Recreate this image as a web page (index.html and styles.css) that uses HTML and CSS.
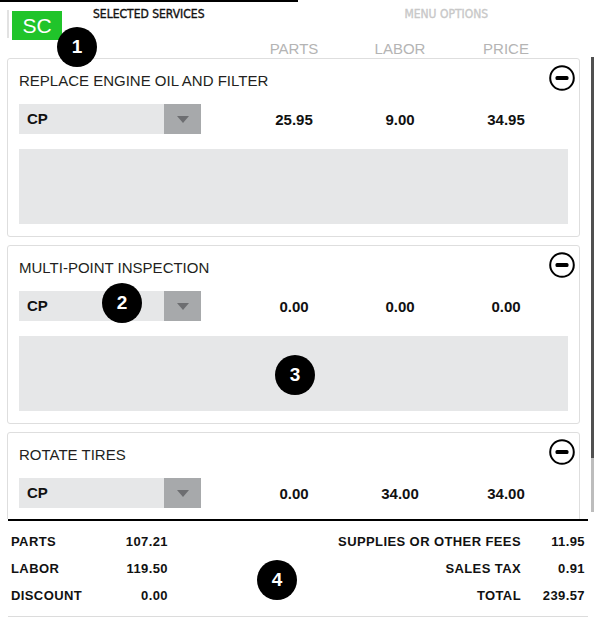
FILE: index.html
```html
<!DOCTYPE html>
<html lang="en">
<head>
<meta charset="utf-8">
<title>Selected Services</title>
<link rel="stylesheet" href="styles.css">
</head>
<body>
<div class="app">
  <header class="top">
    <nav class="tabs">
      <div class="tab active">SELECTED SERVICES</div>
      <div class="tab">MENU OPTIONS</div>
    </nav>
    <div class="brand"><div class="sc">SC</div></div>
    <div class="cols head">
      <span class="col">PARTS</span>
      <span class="col">LABOR</span>
      <span class="col">PRICE</span>
    </div>
  </header>

  <main class="list">
    <section class="card">
      <div class="card-title">
        <span>REPLACE ENGINE OIL AND FILTER</span>
        <svg class="minus" width="26" height="26" viewBox="0 0 26 26"><circle cx="13" cy="13" r="11.8" fill="none" stroke="#000" stroke-width="2"/><rect x="6.5" y="11" width="13" height="4" rx="1.5" fill="#000"/></svg>
      </div>
      <div class="row">
        <div class="select"><span class="select-label">CP</span><span class="select-arrow"><i class="tri"></i></span></div>
        <div class="cols vals"><span class="col">25.95</span><span class="col">9.00</span><span class="col">34.95</span></div>
      </div>
      <div class="notes"></div>
    </section>

    <section class="card">
      <div class="card-title">
        <span>MULTI-POINT INSPECTION</span>
        <svg class="minus" width="26" height="26" viewBox="0 0 26 26"><circle cx="13" cy="13" r="11.8" fill="none" stroke="#000" stroke-width="2"/><rect x="6.5" y="11" width="13" height="4" rx="1.5" fill="#000"/></svg>
      </div>
      <div class="row">
        <div class="select"><span class="select-label">CP</span><span class="select-arrow"><i class="tri"></i></span></div>
        <div class="cols vals"><span class="col">0.00</span><span class="col">0.00</span><span class="col">0.00</span></div>
      </div>
      <div class="notes"></div>
    </section>

    <section class="card">
      <div class="card-title">
        <span>ROTATE TIRES</span>
        <svg class="minus" width="26" height="26" viewBox="0 0 26 26"><circle cx="13" cy="13" r="11.8" fill="none" stroke="#000" stroke-width="2"/><rect x="6.5" y="11" width="13" height="4" rx="1.5" fill="#000"/></svg>
      </div>
      <div class="row">
        <div class="select"><span class="select-label">CP</span><span class="select-arrow"><i class="tri"></i></span></div>
        <div class="cols vals"><span class="col">0.00</span><span class="col">34.00</span><span class="col">34.00</span></div>
      </div>
      <div class="notes"></div>
    </section>
  </main>

  <footer class="totals">
    <div class="tgrid left">
      <span>PARTS</span><span class="num">107.21</span>
      <span>LABOR</span><span class="num">119.50</span>
      <span>DISCOUNT</span><span class="num">0.00</span>
    </div>
    <div class="tgrid right">
      <span class="lbl">SUPPLIES OR OTHER FEES</span><span class="num">11.95</span>
      <span class="lbl">SALES TAX</span><span class="num">0.91</span>
      <span class="lbl">TOTAL</span><span class="num">239.57</span>
    </div>
  </footer>

  <div class="scrollbar"><div class="thumb"></div></div>

  <div class="badge b1">1</div>
  <div class="badge b2">2</div>
  <div class="badge b3">3</div>
  <div class="badge b4">4</div>
</div>
</body>
</html>
```

FILE: styles.css
```css
html, body {
  margin: 0;
  padding: 0;
  background: #fff;
}

.app {
  position: relative;
  width: 595px;
  height: 617px;
  overflow: hidden;
  font-family: "Liberation Sans", Arial, sans-serif;
  color: #1d1d1f;
}

/* header */
.top {
  height: 58px;
}

.tabs {
  display: flex;
}

.tab {
  flex: 1;
  text-align: center;
  border-top: 2px solid transparent;
  line-height: 24px;
  height: 24px;
  font-family: "DejaVu Sans Condensed", "Liberation Sans", sans-serif;
  font-weight: normal;
  font-size: 12px;
  -webkit-text-stroke: 0.35px currentColor;
  color: #c8c8c8;
}

.tab.active {
  border-top-color: #000;
  color: #111;
}

.brand {
  position: absolute;
  left: 7px;
  top: 10px;
  display: flex;
  gap: 3px;
}

.brand::before {
  content: "";
  width: 2px;
  height: 28px;
  background: #e2e2e2;
}

.sc {
  margin-top: 1px;
  width: 50px;
  height: 29px;
  background: #20c42a;
  color: #fff;
  font-size: 21px;
  line-height: 29px;
  text-align: center;
}

.cols {
  display: flex;
}

.col {
  width: 106px;
  text-align: center;
}

.head {
  margin-top: 14px;
  margin-left: 241px;
  font-size: 15px;
  line-height: 18px;
  color: #b4b4b4;
}

/* list */
.list {
  height: 461px;
  overflow: hidden;
}

.card {
  margin: 0 15px 8px 7px;
  border: 1px solid #dedede;
  border-radius: 3px;
  padding: 13px 11px 12px 11px;
}

.card-title {
  display: flex;
  justify-content: space-between;
  align-items: center;
  height: 18px;
  font-size: 15px;
  line-height: 18px;
  color: #231f20;
}

.minus {
  margin-top: -6px;
  margin-right: -7px;
}

.row {
  margin-top: 14px;
  height: 30px;
  display: flex;
  align-items: center;
}

.select {
  width: 182px;
  height: 30px;
  display: flex;
  background: #e6e7e8;
}

.select-label {
  flex: 1;
  padding-left: 8px;
  font-weight: bold;
  font-size: 15px;
  line-height: 30px;
  color: #111;
}

.select-arrow {
  width: 37px;
  background: #a7a9ab;
  display: flex;
  align-items: center;
  justify-content: center;
}

.tri {
  width: 0;
  height: 0;
  border-left: 6.5px solid transparent;
  border-right: 6.5px solid transparent;
  border-top: 7px solid #6d6e71;
  margin-left: 1px;
}

.vals {
  margin-left: 40px;
  font-weight: bold;
  font-size: 15px;
  color: #111;
}

.notes {
  margin-top: 15px;
  height: 75px;
  background: #e6e7e8;
}

/* totals */
.totals {
  margin: 0 7px 0 8px;
  border-top: 2px solid #000;
  border-bottom: 1px solid #dcdcdc;
  padding: 7px 3px;
  display: flex;
  justify-content: space-between;
  font-weight: bold;
  font-size: 13px;
  letter-spacing: 0.4px;
  line-height: 27px;
  color: #111;
}

.tgrid {
  display: grid;
}

.tgrid.left {
  grid-template-columns: 95px 62px;
}

.tgrid.right {
  grid-template-columns: auto 64px;
}

.num {
  text-align: right;
}

.lbl {
  text-align: right;
}

/* scrollbar overlay */
.scrollbar {
  position: absolute;
  left: 591px;
  top: 57px;
  width: 3px;
  height: 455px;
  background: #bdbdbd;
}

.thumb {
  height: 401px;
  background: #505050;
}

/* annotation badges */
.badge {
  position: absolute;
  width: 40px;
  height: 40px;
  border-radius: 50%;
  background: #000;
  color: #fff;
  font-weight: bold;
  font-size: 19px;
  display: flex;
  align-items: center;
  justify-content: center;
}

.b1 { left: 57px; top: 27px; }
.b2 { left: 102px; top: 283px; }
.b3 { left: 275px; top: 355px; }
.b4 { left: 257px; top: 560px; }
```
